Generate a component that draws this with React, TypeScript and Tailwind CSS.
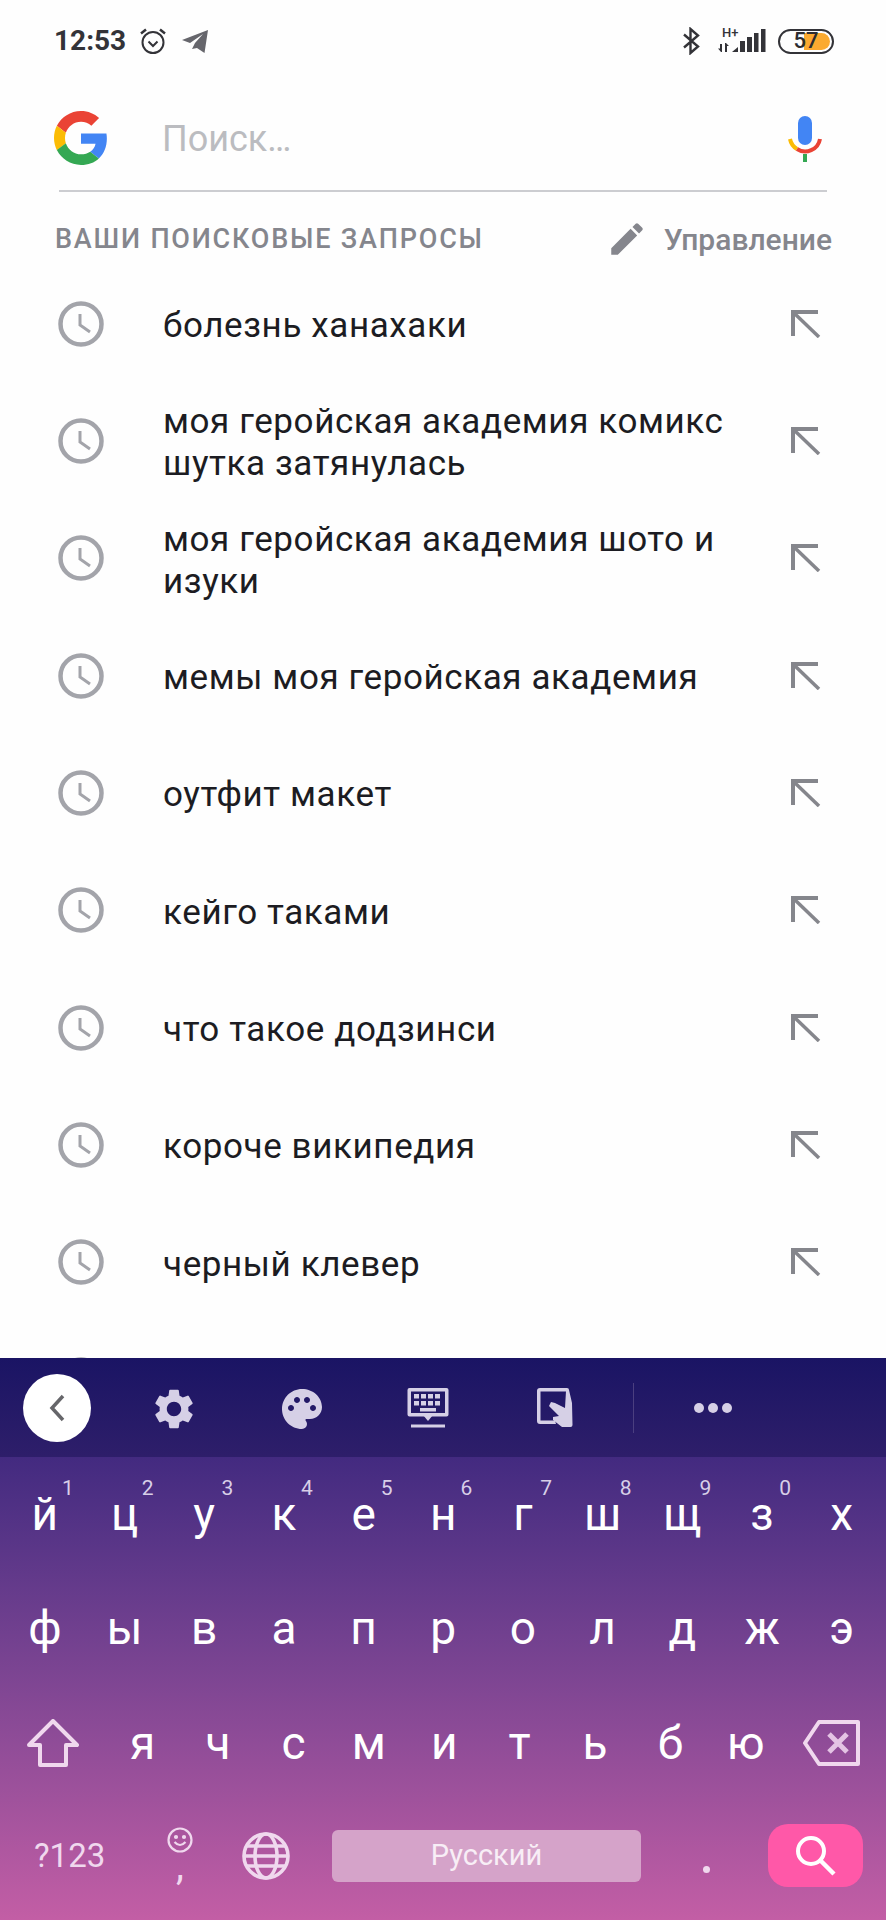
import { MdSettings, MdPalette, MdEdit } from "react-icons/md";

const history = [
  ["болезнь ханахаки"],
  ["моя геройская академия комикс", "шутка затянулась"],
  ["моя геройская академия шото и", "изуки"],
  ["мемы моя геройская академия"],
  ["оутфит макет"],
  ["кейго таками"],
  ["что такое додзинси"],
  ["короче википедия"],
  ["черный клевер"],
  [""],
];

const row1 = ["й", "ц", "у", "к", "е", "н", "г", "ш", "щ", "з", "х"];
const digits = ["1", "2", "3", "4", "5", "6", "7", "8", "9", "0"];
const row2 = ["ф", "ы", "в", "а", "п", "р", "о", "л", "д", "ж", "э"];
const row3 = ["я", "ч", "с", "м", "и", "т", "ь", "б", "ю"];

function GoogleLogo() {
  return (
    <svg width="54" height="54" viewBox="0 0 48 48">
      <path fill="#EA4335" d="M24 9.5c3.54 0 6.71 1.22 9.21 3.6l6.85-6.85C35.9 2.38 30.47 0 24 0 14.62 0 6.51 5.38 2.56 13.22l7.98 6.19C12.43 13.72 17.74 9.5 24 9.5z" />
      <path fill="#4285F4" d="M46.98 24.55c0-1.57-.15-3.09-.38-4.55H24v9.02h12.94c-.58 2.96-2.26 5.48-4.78 7.18l7.73 6c4.51-4.18 7.09-10.36 7.09-17.65z" />
      <path fill="#FBBC05" d="M10.53 28.59c-.48-1.45-.76-2.99-.76-4.59s.27-3.14.76-4.59l-7.98-6.19C.92 16.46 0 20.12 0 24c0 3.88.92 7.54 2.56 10.78l7.97-6.19z" />
      <path fill="#34A853" d="M24 48c6.48 0 11.93-2.13 15.89-5.81l-7.73-6c-2.15 1.45-4.92 2.3-8.16 2.3-6.26 0-11.57-4.22-13.47-9.91l-7.98 6.19C6.51 42.62 14.62 48 24 48z" />
    </svg>
  );
}

function MicIcon() {
  return (
    <svg className="mt-[2px]" width="34" height="46" viewBox="0 0 34 46">
      <rect x="10" y="0" width="14" height="29" rx="7" fill="#4285F4" />
      <path d="M2 23 A15 15 0 0 0 9 33" fill="none" stroke="#FBBC05" strokeWidth="4" />
      <path d="M9 33 A15 15 0 0 0 32 23" fill="none" stroke="#EA4335" strokeWidth="4" />
      <rect x="15" y="38" width="4" height="8" fill="#34A853" />
    </svg>
  );
}

function ClockIcon() {
  return (
    <svg className="mt-[-2px]" width="46" height="46" viewBox="0 0 46 46" fill="none" stroke="#a3a4aa">
      <circle cx="23" cy="23" r="20.5" strokeWidth="4.5" />
      <path d="M22 13 V24 L32 31" strokeWidth="3" />
    </svg>
  );
}

function ArrowIcon() {
  return (
    <svg className="mt-[-2px]" width="30" height="28" viewBox="0 0 30 28" fill="none" stroke="#85868c">
      <path d="M2 26 V2 H27" strokeWidth="4" />
      <path d="M3 3 L28 27" strokeWidth="3.5" />
    </svg>
  );
}

function StatusBar() {
  return (
    <div className="flex h-[82px] shrink-0 items-center pl-[54px] pr-[52px]">
      <span className="text-[28px] font-bold leading-none text-[#333338]">12:53</span>
      <svg className="ml-[13px]" width="28" height="28" viewBox="0 0 28 28" fill="none" stroke="#333338">
        <circle cx="14" cy="15.5" r="10.5" strokeWidth="2" />
        <path d="M9.5 14.5 L14 19 L18.5 14.5" strokeWidth="2" />
        <path d="M2 6.5 L7 2.5 M26 6.5 L21 2.5" strokeWidth="2.5" />
      </svg>
      <svg className="ml-[14px]" width="28" height="25" viewBox="0 0 28 25" fill="#66666c">
        <path d="M27 1 L23.5 24 L16 19 L11 20 L14 14 L22 5 L9 14 L1 11 Z" />
      </svg>
      <div className="flex-1" />
      <svg width="18" height="28" viewBox="0 0 18 28" fill="none" stroke="#333338" strokeWidth="2.4">
        <path d="M2 7.5 L16 19.5 L8.5 26 V2 L16 8.5 L2 20.5" />
      </svg>
      <div className="relative ml-[18px] h-[26px] w-[48px]">
        <span className="absolute left-[4px] top-[-2px] text-[13px] font-medium leading-none text-[#333338]">H+</span>
        <svg className="absolute left-0 top-0" width="48" height="26" viewBox="0 0 48 26" fill="#333338">
          <path d="M2 16 H4 V24 H3 L0 20.5 H2 Z M7 24 H9 V18 H11 L8 15 H7 Z" />
          <path d="M14 24 L20 19 V24 Z" />
          <rect x="22" y="13" width="5" height="11" />
          <rect x="29" y="9" width="5" height="15" />
          <rect x="36" y="5" width="4.5" height="19" />
          <rect x="43" y="1" width="4.5" height="23" />
        </svg>
      </div>
      <div className="relative ml-[12px] h-[25px] w-[56px] rounded-full border-[2.5px] border-[#333338]">
        <div className="absolute bottom-[2px] right-[2px] top-[2px] w-[26px] rounded-r-full bg-[#fbaa30]" />
        <span className="absolute inset-0 flex items-center justify-center text-[22px] font-medium leading-none text-[#2c2c30]">57</span>
      </div>
    </div>
  );
}

function Keyboard() {
  return (
    <div className="h-[562px] shrink-0 bg-white">
      <div className="relative flex h-[99px] items-center bg-gradient-to-b from-[#1a1464] to-[#2e1e6a] text-[#d6d0e6]">
        <div className="ml-[23px] flex h-[68px] w-[68px] items-center justify-center rounded-full bg-white">
          <svg width="18" height="28" viewBox="0 0 18 28" fill="none" stroke="#66666a" strokeWidth="3.5">
            <path d="M15 2 L4 14 L15 26" />
          </svg>
        </div>
        <MdSettings className="ml-[59px] mt-[3px]" size={48} />
        <MdPalette className="ml-[80px] mt-[3px]" size={48} />
        <svg className="ml-[81px] mt-[1px]" width="42" height="42" viewBox="0 0 42 42" fill="currentColor">
          <path d="M2.5 1 H39.5 a2 2 0 0 1 2 2 V27.5 a2 2 0 0 1-2 2 H2.5 a2 2 0 0 1-2-2 V3 a2 2 0 0 1 2-2 Z M4 4.5 V26 H38 V4.5 Z" fillRule="evenodd" />
          <path d="M16 28 H26 L21 34 Z" />
          <rect x="7" y="7" width="5" height="4.5" />
          <rect x="14" y="7" width="5" height="4.5" />
          <rect x="21" y="7" width="5" height="4.5" />
          <rect x="28" y="7" width="5" height="4.5" />
          <rect x="7" y="14" width="5" height="4.5" />
          <rect x="14" y="14" width="5" height="4.5" />
          <rect x="21" y="14" width="5" height="4.5" />
          <rect x="28" y="14" width="5" height="4.5" />
          <rect x="13" y="21" width="16" height="3.5" />
          <rect x="4" y="37.5" width="34" height="3" />
        </svg>
        <svg className="ml-[87px] mt-[1px]" width="38" height="42" viewBox="0 0 38 42" fill="currentColor">
          <path fillRule="evenodd" d="M4 1 H31 a2 2 0 0 1 2 2 L33 6 L30 6 V4.5 H4.5 V33.5 H19 L20 37 H4 a3 3 0 0 1-3-3 V4 a3 3 0 0 1 3-3 Z" />
          <path d="M30 4 L33 3 L36 16 L36.5 38 a2 2 0 0 1-2 2 L26 40 L17 33 V30 L23 29 L13 19 L15 15 L19 16 L29 21 Z" />
        </svg>
        <div className="ml-[59px] h-[50px] w-[1px] bg-[#4b3f80]" />
        <div className="ml-[60px] flex gap-[4px]">
          <span className="h-[10px] w-[10px] rounded-full bg-current" />
          <span className="h-[10px] w-[10px] rounded-full bg-current" />
          <span className="h-[10px] w-[10px] rounded-full bg-current" />
        </div>
      </div>

      <div className="flex h-[463px] flex-col bg-gradient-to-b from-[#432a80] to-[#c35ea5] font-['Roboto',sans-serif] text-white">
        <div className="flex h-[116px] items-center pl-[5px]">
          {row1.map((k, i) => (
            <div key={k} className="relative flex h-full w-[79.7px] items-center justify-center pb-[2px] text-[46px] leading-none">
              {k}
              {digits[i] && <span className="absolute left-[57px] top-[21px] text-[21px] text-[#d8cfe8]">{digits[i]}</span>}
            </div>
          ))}
        </div>
        <div className="flex h-[116px] items-center pl-[5px]">
          {row2.map((k) => (
            <div key={k} className="flex h-full w-[79.7px] items-center justify-center pb-[6px] text-[46px] leading-none">
              {k}
            </div>
          ))}
        </div>
        <div className="flex h-[116px] items-center pl-[27px]">
          <svg className="mr-[26px] mb-[8px]" width="52" height="48" viewBox="0 0 52 48" fill="none" stroke="#f0d8ee" strokeWidth="4" strokeLinejoin="round">
            <path d="M26 2 L50 26 H39 V46 H13 V26 H2 Z" />
          </svg>
          {row3.map((k) => (
            <div key={k} className="flex h-full w-[75.4px] items-center justify-center pb-[8px] text-[46px] leading-none">
              {k}
            </div>
          ))}
          <svg className="ml-[19px] mb-[8px]" width="58" height="46" viewBox="0 0 58 46" fill="none" stroke="#f0d8ee" strokeWidth="4" strokeLinejoin="round">
            <path d="M16 2 H55 V44 H16 L2 23 Z" />
            <path d="M26 14 L44 32 M44 14 L26 32" strokeWidth="5" stroke="#e4c4e4" />
          </svg>
        </div>
        <div className="flex h-[115px] items-center pb-[14px] pl-[34px]">
          <span className="w-[119px] text-[33px] leading-none text-[#f0d8ee]">?123</span>
          <div className="flex w-[54px] flex-col items-center">
            <svg width="26" height="26" viewBox="0 0 26 26" fill="none" stroke="#f0d8ee" strokeWidth="2.2">
              <circle cx="13" cy="13" r="11.5" />
              <path d="M7.5 15 Q13 21 18.5 15" />
              <circle cx="9" cy="10" r="1" fill="#f0d8ee" />
              <circle cx="17" cy="10" r="1" fill="#f0d8ee" />
            </svg>
            <span className="mt-[-7px] h-[39px] text-[40px] leading-none text-[#f0d8ee]">,</span>
          </div>
          <svg className="ml-[35px]" width="48" height="48" viewBox="0 0 48 48" fill="none" stroke="#f0d8ee" strokeWidth="3.6">
            <circle cx="24" cy="24" r="22" />
            <ellipse cx="24" cy="24" rx="11" ry="22" />
            <path d="M5 14 H43 M5 34 H43 M2 24 H46" />
          </svg>
          <div className="ml-[42px] flex h-[52px] w-[309px] items-center justify-center rounded-[6px] bg-[#d5a3c9] text-[29px] text-[#f8eef6]">
            Русский
          </div>
          <div className="ml-[62px] h-[7px] w-[7px] translate-y-[14px] rounded-full bg-[#f0d8ee]" />
          <div className="ml-[58px] flex h-[63px] w-[95px] items-center justify-center rounded-[20px] bg-[#ff58a8]">
            <svg width="42" height="42" viewBox="0 0 42 42" fill="none" stroke="#fff" strokeWidth="4">
              <circle cx="16" cy="16" r="13" />
              <path d="M25 25 L39 39" strokeWidth="4.5" />
            </svg>
          </div>
        </div>
      </div>
    </div>
  );
}

export default function App() {
  return (
    <div className="flex h-[1920px] w-[886px] flex-col overflow-hidden bg-[#fefefe] font-['Roboto',sans-serif]">
      <StatusBar />

      <div className="flex h-[108px] shrink-0 items-center justify-between pl-[54px] pr-[64px] pt-[4px]">
        <GoogleLogo />
        <span className="ml-[54px] mt-[2px] flex-1 text-[36px] leading-none text-[#bbbcc0]">Поиск…</span>
        <MicIcon />
      </div>
      <div className="mx-[59px] h-[2px] shrink-0 bg-[#cccdd1]" />

      <div className="flex h-[74px] shrink-0 items-center justify-between pl-[55px] pr-[54px] pt-[20px]">
        <span className="text-[27px] font-medium tracking-[1.8px] text-[#85868d]">ВАШИ ПОИСКОВЫЕ ЗАПРОСЫ</span>
        <div className="flex items-center">
          <MdEdit className="text-[#85868d]" size={42} />
          <span className="ml-[16px] text-[30px] font-medium text-[#85868d]">Управление</span>
        </div>
      </div>

      <div className="min-h-0 flex-1 overflow-hidden">
        {history.map((lines, i) => (
          <div key={i} className="flex h-[117.33px] items-center pl-[58px] pr-[65px]">
            <ClockIcon />
            <div className="ml-[59px] flex-1 pt-[3px] text-[35px] leading-[42px] tracking-[0.6px] text-[#1c1c22]">
              {lines.map((l) => (
                <div key={l}>{l}</div>
              ))}
            </div>
            <ArrowIcon />
          </div>
        ))}
      </div>

      <Keyboard />
    </div>
  );
}
